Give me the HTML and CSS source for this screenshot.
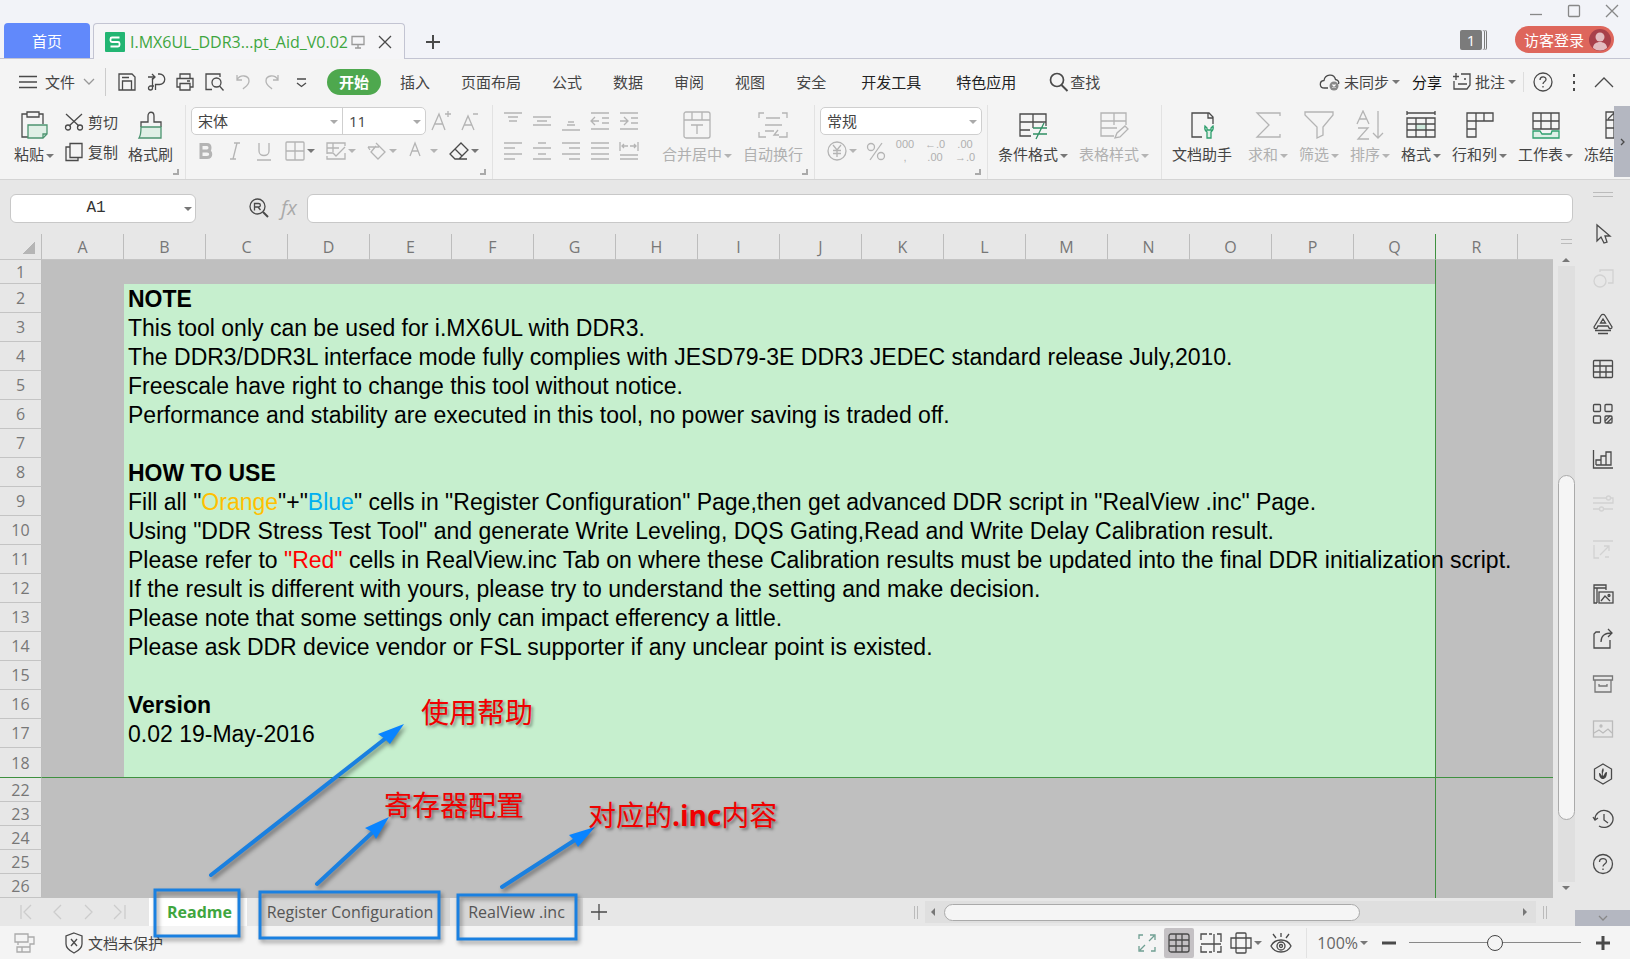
FILE: index.html
```html
<!DOCTYPE html>
<html lang="zh-CN">
<head>
    <meta charset="UTF-8">
    <title>I.MX6UL_DDR3 Script Aid V0.02</title>
    <link rel="stylesheet" href="styles.css">
</head>
<body>

<!-- Title bar -->
<header class="titlebar">
    <button class="home-tab">首页</button>
    <div class="doc-tab">
        <svg class="logo" width="20" height="20" viewBox="0 0 20 20"><rect width="20" height="20" rx="1" fill="#22b573"/><path d="M14.5 5.5H7a1.500 1.500 0 0 0-1.500 1.500v1.500A1.500 1.500 0 0 0 7 10h6a1.500 1.500 0 0 1 1.500 1.500V13a1.500 1.500 0 0 1-1.500 1.500H5.500" fill="none" stroke="#fff" stroke-width="1.800"/></svg>
        <span class="doc-name">I.MX6UL_DDR3...pt_Aid_V0.02</span>
        <svg class="grey" width="14" height="14" viewBox="0 0 14 14"><path d="M1 1.500h12v8H1zM7 9.500v3M4 13h6"/></svg>
        <button class="icon-btn close-tab" aria-label="关闭"><svg width="14" height="14" viewBox="0 0 14 14"><path d="M1 1l12 12M13 1L1 13"/></svg></button>
    </div>
    <button class="icon-btn new-tab" aria-label="新建"><svg width="16" height="16" viewBox="0 0 16 16"><path class="thick" d="M8 1v14M1 8h14"/></svg></button>
    <div class="window-side">
        <div class="window-controls">
            <button class="icon-btn" aria-label="最小化"><svg width="14" height="14" viewBox="0 0 14 14"><path d="M1 10.500h12"/></svg></button>
            <button class="icon-btn" aria-label="最大化"><svg width="14" height="14" viewBox="0 0 14 14"><rect x="1.500" y="1.500" width="11" height="11" rx="1"/></svg></button>
            <button class="icon-btn" aria-label="关闭窗口"><svg width="14" height="14" viewBox="0 0 14 14"><path d="M1 1l12 12M13 1L1 13"/></svg></button>
        </div>
        <div class="account">
            <span class="count">1</span>
            <button class="login">访客登录
                <svg width="22" height="22" viewBox="0 0 22 22"><circle cx="11" cy="11" r="11" fill="#a8404a"/><circle cx="11" cy="8" r="4.500" fill="#e3bcc0"/><path d="M4 19c0-8 14-8 14 0a11 11 0 0 1-14 0z" fill="#e3bcc0"/></svg>
            </button>
        </div>
    </div>
</header>

<!-- Menu -->
<nav class="menu">
    <button class="file-btn">
        <svg width="18" height="14" viewBox="0 0 18 14"><path d="M0 1.500h18M0 7h18M0 12.500h18"/></svg>
        文件
        <svg class="grey" width="12" height="8" viewBox="0 0 12 8"><path d="M1 1l5 5 5-5"/></svg>
    </button>
    <div class="quick">
        <button class="icon-btn" aria-label="保存"><svg width="20" height="20" viewBox="0 0 20 20"><path d="M2 2h13l3 3v13H2zM5.500 18V9h9v9M5 5.500h7"/></svg></button>
        <button class="icon-btn" aria-label="输出"><svg width="20" height="20" viewBox="0 0 20 20"><path d="M2 5h7M6 2l3 3-3 3M8 14H4.500a2 2 0 1 0 2 2V6M12 2h1.500a4.500 4.500 0 0 1 0 10.500H9.500V18"/></svg></button>
        <button class="icon-btn" aria-label="打印"><svg width="20" height="20" viewBox="0 0 20 20"><path d="M5 6V2h10v4M5 15H2V6.500h16V15h-3M5 11.500h10V18H5zM12 9h3"/></svg></button>
        <button class="icon-btn" aria-label="预览"><svg width="20" height="20" viewBox="0 0 20 20"><path d="M8 17.500H2V2h14v3"/><circle cx="12.500" cy="10.500" r="4.500"/><path d="M15.500 14l4 4.500"/></svg></button>
        <button class="icon-btn off" aria-label="撤销"><svg width="20" height="20" viewBox="0 0 20 20"><path d="M4 3v5h5M4 8c3-6 12-5 12 1 0 4-4 6-6 8"/></svg></button>
        <button class="icon-btn off" aria-label="恢复"><svg width="20" height="20" viewBox="0 0 20 20"><path d="M16 3v5h-5M16 8c-3-6-12-5-12 1 0 4 4 6 6 8"/></svg></button>
        <button class="icon-btn" aria-label="更多"><svg width="20" height="20" viewBox="0 0 20 20"><path d="M6 7h9M6 11l4.500 3.500L15 11"/></svg></button>
    </div>
    <button class="tab active">开始</button>
    <button class="tab">插入</button>
    <button class="tab">页面布局</button>
    <button class="tab">公式</button>
    <button class="tab">数据</button>
    <button class="tab">审阅</button>
    <button class="tab">视图</button>
    <button class="tab">安全</button>
    <button class="tab wide">开发工具</button>
    <button class="tab wide">特色应用</button>
    <button class="find"><svg width="20" height="20" viewBox="0 0 20 20"><circle cx="8" cy="8" r="6.500" stroke-width="1.700"/><path class="thick" d="M12.500 13l6 6"/></svg>查找</button>
    <div class="menu-right">
        <button><svg width="22" height="20" viewBox="0 0 22 20"><path d="M9 16H5.500C0 16 0 9 5 8.500 6 2 15 1 16.500 7.500 19 8 20.500 10 19.500 12"/><circle cx="15" cy="14" r="4.500" fill="#888" stroke="none"/><path d="M13.500 12.500l3 3M16.500 12.500l-3 3" stroke="#fff"/></svg>未同步<i class="caret"></i></button>
        <button class="share">分享</button>
        <button><svg width="20" height="20" viewBox="0 0 20 20"><path d="M4 1v7M1 4.500h6M9 2h9v11l-3 4H2V9M6 12h9M12 7h2"/></svg>批注<i class="caret"></i></button>
        <button class="icon-btn help" aria-label="帮助"><svg width="20" height="20" viewBox="0 0 20 20"><circle cx="10" cy="10" r="9"/><path d="M7 8c0-4 6-4 6-.5 0 2-3 2-3 4.500M10 14v1.500"/></svg></button>
        <button class="icon-btn dots" aria-label="选项"><svg width="4" height="18" viewBox="0 0 4 18"><path class="thick" d="M2 1v3M2 8v3M2 15v3"/></svg></button>
        <button class="icon-btn" aria-label="收起"><svg width="20" height="12" viewBox="0 0 20 12"><path d="M1 11l9-9 9 9"/></svg></button>
    </div>
</nav>

<!-- Ribbon -->
<section class="ribbon">
    <div class="group clipboard">
        <button class="big"><svg width="30" height="30" viewBox="0 0 30 30"><path d="M8 4H3v23h7M20 4h4v10M8 2h12v5H8z"/><path d="M9 15h19v9l-4 4H9z" fill="#e0efe6" stroke="#4c9470"/><path d="M28 24h-4v4" stroke="#4c9470"/></svg><span>粘贴<i class="caret"></i></span></button>
        <div class="stack">
            <button><svg width="20" height="20" viewBox="0 0 20 20"><path d="M2 2l13 12M18 2L5 14"/><circle cx="4" cy="15.500" r="2.500"/><circle cx="16" cy="15.500" r="2.500"/></svg>剪切</button>
            <button><svg width="20" height="20" viewBox="0 0 20 20"><path d="M6 1.500h12v14H6zM6 5H2v13.500h12v-3"/></svg>复制</button>
        </div>
        <button class="big brush"><svg width="30" height="30" viewBox="0 0 30 30"><path d="M5 17v-5h7V6c0-5 6-5 6 0v6h7v5"/><path d="M5 17h20v11H3c2-3 2-6 2-11z" fill="#e0efe6" stroke="#4c9470"/></svg><span>格式刷</span></button>
        <i class="corner"></i>
    </div>

    <div class="group font">
        <div class="row">
            <div class="combo">
                <label class="select family"><select aria-label="字体"><option>宋体</option></select></label>
                <label class="select size"><select aria-label="字号"><option>11</option></select></label>
            </div>
            <button class="tool off" aria-label="增大字号"><svg width="20" height="22" viewBox="0 0 20 22"><path d="M1 20L8 4l6 16M3 14h9M14 4h6M17 1v6"/></svg></button>
            <button class="tool off" aria-label="减小字号"><svg width="20" height="22" viewBox="0 0 20 22"><path d="M2 20L8 6l6 14M4 15h8M13 4h5"/></svg></button>
        </div>
        <div class="row">
            <button class="tool off" aria-label="加粗"><svg width="20" height="20" viewBox="0 0 20 20"><path class="heavy" d="M5 3.500v13h6c5 0 5-6.500 0-6.500 4 0 4-6.500 0-6.500zM5 10h6"/></svg></button>
            <button class="tool off" aria-label="倾斜"><svg width="20" height="20" viewBox="0 0 20 20"><path d="M9 2h6M5 18h6M12 2L8 18"/></svg></button>
            <button class="tool off" aria-label="下划线"><svg width="20" height="20" viewBox="0 0 20 20"><path d="M5 2v8c0 6 10 6 10 0V2M3 19h14"/></svg></button>
            <button class="drop off dark-caret" aria-label="边框"><svg width="20" height="20" viewBox="0 0 20 20"><rect x="1" y="1" width="18" height="18" rx="1"/><path d="M10 1v18M1 10h18"/></svg><i class="caret"></i></button>
            <button class="drop off" aria-label="样式"><svg width="20" height="20" viewBox="0 0 20 20"><path d="M19 5V2H1v11M1 7h12M7 2v9M1 12h6l3 3 9-9M1 15v3h18v-6"/></svg><i class="caret"></i></button>
            <button class="drop off" aria-label="填充"><svg width="20" height="20" viewBox="0 0 20 20"><path d="M1 6h11M1 6l2 3M9 2l9 9-7 7-7-7 5-6"/></svg><i class="caret"></i></button>
            <button class="drop off" aria-label="字体颜色"><svg width="20" height="20" viewBox="0 0 20 20"><path d="M2 15L7 2l5 13M4 10h6"/></svg><i class="caret"></i></button>
            <button class="drop" aria-label="清除"><svg width="20" height="20" viewBox="0 0 20 20"><path d="M12 2l7 7-9 9H6l-5-5zM6 8l7 7M6 18h12"/></svg><i class="caret"></i></button>
        </div>
        <i class="corner"></i>
    </div>

    <div class="group align">
        <div class="align-tools">
            <div class="row">
                <button class="tool off" aria-label="顶端对齐"><svg width="20" height="20" viewBox="0 0 20 20"><path d="M1 2h18M5 6h10M6 10h8"/></svg></button>
                <button class="tool off" aria-label="垂直居中"><svg width="20" height="20" viewBox="0 0 20 20"><path d="M1 6h18M5 10h10M1 14h18"/></svg></button>
                <button class="tool off" aria-label="底端对齐"><svg width="20" height="20" viewBox="0 0 20 20"><path d="M7 11h6M6 14h8M1 19h18"/></svg></button>
                <button class="tool off" aria-label="减少缩进"><svg width="20" height="20" viewBox="0 0 20 20"><path d="M1 2h18M12 7h7M12 12h7M1 18h18M1 10h8M5 6l-4 4 4 4"/></svg></button>
                <button class="tool off" aria-label="增加缩进"><svg width="20" height="20" viewBox="0 0 20 20"><path d="M1 2h18M12 7h7M12 12h7M1 18h18M1 10h8M5 6l4 4-4 4"/></svg></button>
            </div>
            <div class="row">
                <button class="tool off" aria-label="左对齐"><svg width="20" height="20" viewBox="0 0 20 20"><path d="M1 2h18M1 7h11M1 13h18M1 18h11"/></svg></button>
                <button class="tool off" aria-label="居中"><svg width="20" height="20" viewBox="0 0 20 20"><path d="M6 2h8M1 7h18M6 13h8M1 18h18"/></svg></button>
                <button class="tool off" aria-label="右对齐"><svg width="20" height="20" viewBox="0 0 20 20"><path d="M1 2h18M8 7h11M1 13h18M8 18h11"/></svg></button>
                <button class="tool off" aria-label="两端对齐"><svg width="20" height="20" viewBox="0 0 20 20"><path d="M1 2h18M1 7h18M1 13h18M1 18h18"/></svg></button>
                <button class="tool off" aria-label="分散对齐"><svg width="20" height="20" viewBox="0 0 20 20"><path d="M1 1v9M19 1v9M3 5h6M11 5h6M5 3L3 5l2 2M15 3l2 2-2 2M1 14h18M1 18h18"/></svg></button>
            </div>
        </div>
        <button class="big off"><svg width="30" height="30" viewBox="0 0 30 30"><rect x="2" y="2" width="26" height="26" rx="2"/><path d="M2 10h26M10 2v8M20 2v8M9 15h12M15 15v9"/></svg><span>合并居中<i class="caret"></i></span></button>
        <button class="big off"><svg width="30" height="30" viewBox="0 0 30 30"><path d="M1 8V3h5M24 3h5v5M29 22v5h-8M8 27H1v-5M8 8h14M7 15h17M7 21h9M20 20l-4 5h5"/></svg><span>自动换行</span></button>
        <i class="corner"></i>
    </div>

    <div class="group number">
        <div class="row">
            <div class="combo"><label class="select format"><select aria-label="数字格式"><option>常规</option></select></label></div>
        </div>
        <div class="row">
            <button class="drop off" aria-label="货币"><svg width="20" height="20" viewBox="0 0 20 20"><circle cx="10" cy="10" r="9"/><path d="M6 4l4 5 4-5M10 9v7M6 9.500h8M6 12.500h8"/></svg><i class="caret"></i></button>
            <button class="tool off" aria-label="百分比"><svg width="20" height="20" viewBox="0 0 20 20"><circle cx="5" cy="6" r="3.500"/><circle cx="15" cy="15" r="3.500"/><path d="M16 2L4 19"/></svg></button>
            <button class="digits off"><span>000</span><span>,</span></button>
            <button class="digits off"><span>←.0</span><span>.00</span></button>
            <button class="digits off"><span>.00</span><span>→.0</span></button>
        </div>
        <i class="corner"></i>
    </div>

    <div class="group styles">
        <button class="big"><svg width="30" height="30" viewBox="0 0 30 30"><path d="M13 26H2V4h26v12M2 12h26M15 4v14M2 20h10"/><path d="M15 18h14M15 24h14M26 13l-8 16" stroke="#2f8f63"/></svg><span>条件格式<i class="caret"></i></span></button>
        <button class="big off"><svg width="30" height="30" viewBox="0 0 30 30"><path d="M15 26H2V3h25v12M2 11h25M2 18h16M15 3v12M26 16l3 3-8 8-5 1 2-5z"/></svg><span>表格样式<i class="caret"></i></span></button>
    </div>

    <div class="group tools">
        <button class="big"><svg width="30" height="30" viewBox="0 0 30 30"><path d="M15 27H5V3h17l4 4v7M21 3v5h5"/><path d="M18 16c-1 5 1 5 2 6v6h4v-6c1-1 3-2 2-6l-2 2v2h-4v-2z" fill="#dff0e7" stroke="#2f9f6d"/></svg><span>文档助手</span></button>
        <button class="big off sum"><svg width="30" height="30" viewBox="0 0 30 30"><path d="M27 6V3H4l12 12L4 27h23v-3"/></svg><span>求和<i class="caret"></i></span></button>
        <button class="big off"><svg width="30" height="30" viewBox="0 0 30 30"><path d="M1 2h28v3l-10 12v8l-6 3V17L1 5z"/></svg><span>筛选<i class="caret"></i></span></button>
        <button class="big off"><svg width="30" height="30" viewBox="0 0 30 30"><path d="M2 14L8 1l6 13M4 9h8M3 18h10L3 29h11M23 1v27M18 23l5 5 5-5"/></svg><span>排序<i class="caret"></i></span></button>
        <button class="big"><svg width="30" height="30" viewBox="0 0 30 30"><path d="M1 3h28M1 1v4M29 1v4"/><path d="M10 14h10v6H10z" fill="#cfeadd" stroke="none"/><path d="M1 8h28v19H1zM1 14h28M1 20h28M10 8v19M20 8v19"/></svg><span>格式<i class="caret"></i></span></button>
        <button class="big"><svg width="30" height="30" viewBox="0 0 30 30"><path d="M2 3h26v8H11v16H2zM2 11h9V3M19 3v8M2 19h9"/></svg><span>行和列<i class="caret"></i></span></button>
        <button class="big"><svg width="30" height="30" viewBox="0 0 30 30"><path d="M2 3h26v16H2zM2 11h26M10 3v16M20 3v16"/><path d="M2 21h7l2 3h9l1-3h7v7H2z" fill="#dff0e7" stroke="#2f9f6d"/></svg><span>工作表<i class="caret"></i></span></button>
        <button class="big freeze"><svg width="30" height="30" viewBox="0 0 30 30"><path d="M2 2h26v26H2zM2 10h26M10 2v26M2 18h26M10 3l-6 6M18 12l-5 5"/></svg><span>冻结</span></button>
    </div>
    <button class="ribbon-more" aria-label="更多工具"><svg width="5" height="8" viewBox="0 0 5 8"><path d="M1 1l3 3-3 3"/></svg></button>
</section>

<main class="workbook">
    <div class="left-pane">
        <!-- Formula bar -->
        <div class="formula">
            <label class="select name-box"><input type="text" value="A1" aria-label="名称框"></label>
            <button class="icon-btn lookup" aria-label="查找单元格"><svg width="20" height="20" viewBox="0 0 20 20"><circle cx="8.500" cy="8.500" r="7.500"/><path d="M5.500 12.500v-7h4c2.500 0 2.500 3.500 0 3.500h-4M9 9l2.500 3"/><path class="thick" d="M14 14l5 5"/></svg></button>
            <span class="fx">fx</span>
            <input class="formula-input" type="text" aria-label="编辑栏">
        </div>

        <div class="sheet-area">
            <div class="sheet-wrap">
            <table class="sheet">
                <colgroup>
                    <col class="c-head"><col class="c"><col class="c"><col class="c"><col class="c"><col class="c"><col class="c"><col class="c"><col class="c"><col class="c"><col class="c"><col class="c"><col class="c"><col class="c"><col class="c"><col class="c"><col class="c"><col class="c"><col class="c"><col>
                </colgroup>
                <thead>
                    <tr><th class="select-all"></th><th>A</th><th>B</th><th>C</th><th>D</th><th>E</th><th>F</th><th>G</th><th>H</th><th>I</th><th>J</th><th>K</th><th>L</th><th>M</th><th>N</th><th>O</th><th>P</th><th class="edge">Q</th><th>R</th><th class="rest"></th></tr>
                </thead>
                <tbody>
                    <tr class="small"><th>1</th><td></td><td class="edge" colspan="16"></td><td colspan="2"></td></tr>
                    <tr><th>2</th><td></td><td class="note" colspan="16"><b>NOTE</b></td><td colspan="2"></td></tr>
                    <tr><th>3</th><td></td><td class="note" colspan="16">This tool only can be used for i.MX6UL with DDR3.</td><td colspan="2"></td></tr>
                    <tr><th>4</th><td></td><td class="note" colspan="16">The DDR3/DDR3L interface mode fully complies with JESD79-3E DDR3 JEDEC standard release July,2010.</td><td colspan="2"></td></tr>
                    <tr><th>5</th><td></td><td class="note" colspan="16">Freescale have right to change this tool without notice.</td><td colspan="2"></td></tr>
                    <tr><th>6</th><td></td><td class="note" colspan="16">Performance and stability are executed in this tool, no power saving is traded off.</td><td colspan="2"></td></tr>
                    <tr><th>7</th><td></td><td class="note" colspan="16"></td><td colspan="2"></td></tr>
                    <tr><th>8</th><td></td><td class="note" colspan="16"><b>HOW TO USE</b></td><td colspan="2"></td></tr>
                    <tr><th>9</th><td></td><td class="note" colspan="16">Fill all "<span class="orange">Orange</span>"+"<span class="blue">Blue</span>" cells in "Register Configuration" Page,then get advanced DDR script in "RealView .inc" Page.</td><td colspan="2"></td></tr>
                    <tr><th>10</th><td></td><td class="note" colspan="16">Using "DDR Stress Test Tool" and generate Write Leveling, DQS Gating,Read and Write Delay Calibration result.</td><td colspan="2"></td></tr>
                    <tr><th>11</th><td></td><td class="note" colspan="16">Please refer to <span class="red">"Red"</span> cells in RealView.inc Tab on where these Calibration results must be updated into the final DDR initialization script.</td><td colspan="2"></td></tr>
                    <tr><th>12</th><td></td><td class="note" colspan="16">If the result is different with yours, please try to understand the setting and make decision.</td><td colspan="2"></td></tr>
                    <tr><th>13</th><td></td><td class="note" colspan="16">Please note that some settings only can impact efferency a little.</td><td colspan="2"></td></tr>
                    <tr><th>14</th><td></td><td class="note" colspan="16">Please ask DDR device vendor or FSL supporter if any unclear point is existed.</td><td colspan="2"></td></tr>
                    <tr><th>15</th><td></td><td class="note" colspan="16"></td><td colspan="2"></td></tr>
                    <tr><th>16</th><td></td><td class="note" colspan="16"><b>Version</b></td><td colspan="2"></td></tr>
                    <tr><th>17</th><td></td><td class="note" colspan="16">0.02 19-May-2016</td><td colspan="2"></td></tr>
                    <tr class="frozen"><th>18</th><td></td><td class="note" colspan="16"></td><td colspan="2"></td></tr>
                    <tr class="small"><th>22</th><td></td><td class="edge" colspan="16"></td><td colspan="2"></td></tr>
                    <tr class="small"><th>23</th><td></td><td class="edge" colspan="16"></td><td colspan="2"></td></tr>
                    <tr class="small"><th>24</th><td></td><td class="edge" colspan="16"></td><td colspan="2"></td></tr>
                    <tr class="small"><th>25</th><td></td><td class="edge" colspan="16"></td><td colspan="2"></td></tr>
                    <tr class="small"><th>26</th><td></td><td class="edge" colspan="16"></td><td colspan="2"></td></tr>
                </tbody>
            </table>
            </div>
            <div class="vscroll">
                <div class="split-grip"></div>
                <i class="arrow up"></i>
                <div class="vtrack"><div class="vthumb"></div></div>
                <i class="arrow down"></i>
            </div>
        </div>

        <!-- Sheet tabs -->
        <div class="sheet-tabs">
            <div class="tab-nav">
                <svg width="106" height="16" viewBox="0 0 106 16"><path d="M1 1v14M11 1L4 8l7 7M41 1l-7 7 7 7M65 1l7 7-7 7M94 1l7 7-7 7M105 1v14"/></svg>
            </div>
            <button class="sheet-tab current">Readme</button>
            <button class="sheet-tab config">Register Configuration</button>
            <button class="sheet-tab inc">RealView .inc</button>
            <button class="icon-btn add-sheet" aria-label="新建工作表"><svg width="18" height="18" viewBox="0 0 18 18"><path d="M9 1v16M1 9h16"/></svg></button>
            <div class="hscroll">
                <i class="grip"></i>
                <div class="htrack">
                    <i class="arrow left"></i>
                    <div class="hrange"><div class="hthumb"></div></div>
                    <i class="arrow right"></i>
                </div>
                <i class="grip"></i>
            </div>
        </div>
    </div>

    <aside class="sidebar">
        <i class="side-grip"></i>
        <button class="side" aria-label="选择"><svg width="22" height="22" viewBox="0 0 22 22"><path d="M5 2v16l4-4 3 6 3-1-2-6h5z"/></svg></button>
        <button class="side faint" aria-label="形状"><svg width="22" height="22" viewBox="0 0 22 22"><circle cx="8" cy="13" r="6"/><path d="M8 4V2h13v13h-5"/></svg></button>
        <button class="side" aria-label="艺术字"><svg width="22" height="22" viewBox="0 0 22 22"><path d="M2 14L9 2.500c1-1.500 3-1.500 4 0L20 14c0 2-2 2-3 1l-1-2H6l-1 2c-1 1-3 1-3-1zM8.500 10L11 6l2.500 4zM3 17.500h16M6 20.500h10"/></svg></button>
        <button class="side" aria-label="表格"><svg width="22" height="22" viewBox="0 0 22 22"><rect x="1.500" y="2.500" width="19" height="17" rx="1"/><path d="M1 8h20M1 14h20M8 3v17M14 8v12"/></svg></button>
        <button class="side" aria-label="组件"><svg width="22" height="22" viewBox="0 0 22 22"><rect x="1.500" y="1.500" width="7" height="7" rx="1"/><rect x="13" y="1.500" width="7" height="7" rx="1"/><rect x="1.500" y="13" width="7" height="7" rx="1"/><rect x="13" y="13" width="7" height="7" rx="1"/><path d="M13 18l5-5M15 20l5-5"/></svg></button>
        <button class="side" aria-label="图表"><svg width="22" height="22" viewBox="0 0 22 22"><path d="M1.500 2v18H21M4 17v-5h5v5M9 17V8h5v9M14 17V4h5v13zM4 17h15"/></svg></button>
        <button class="side faint" aria-label="设置"><svg width="22" height="22" viewBox="0 0 22 22"><path d="M1 5h13M19 5h2v5H1M1 16h6M12 16h9"/><circle cx="16.500" cy="5" r="2"/><circle cx="9.500" cy="16" r="2"/></svg></button>
        <button class="side faint" aria-label="分析"><svg width="22" height="22" viewBox="0 0 22 22"><path d="M1 3h20M2 7v13h5M8 17l9-9M12 8h5v5M13 19h4"/></svg></button>
        <button class="side" aria-label="图片库"><svg width="22" height="22" viewBox="0 0 22 22"><path d="M5 20H2V2h12v5M2 5h12M5 5v15"/><rect x="7" y="9" width="14" height="11"/><path d="M9 18l4-5 5 5"/><circle cx="17" cy="12.500" r="1"/></svg></button>
        <button class="side" aria-label="分享"><svg width="22" height="22" viewBox="0 0 22 22"><path d="M8 4H4L2 6v14h16v-8M9 14c0-6 3-9 11-9M16 1l4 4-4 4"/></svg></button>
        <button class="side mid" aria-label="归档"><svg width="22" height="22" viewBox="0 0 22 22"><path d="M1.500 3h19v4h-19zM3 7v12h16V7M7 11v2h8v-2"/></svg></button>
        <button class="side pale" aria-label="图片"><svg width="22" height="22" viewBox="0 0 22 22"><rect x="1.500" y="3" width="19" height="16"/><path d="M2 15l5-3 4 3 5-4 4 4"/><circle cx="9" cy="8" r="1"/></svg></button>
        <button class="side" aria-label="安全"><svg width="22" height="22" viewBox="0 0 22 22"><path d="M11 1l8.500 5v10L11 21l-8.500-5V6z"/><path d="M11 5c2 3-1 4 0 8 2-1 1-4 4-4 0 5-2 7-4 7s-4-2-4-6c2 0 2 2 3 3 0-4-1-5 1-8z" fill="#444" stroke="none"/></svg></button>
        <button class="side" aria-label="历史"><svg width="22" height="22" viewBox="0 0 22 22"><path d="M3 11a9 8.500 0 1 1 4 7M1 9l2 3 3-2M12 6v6l4 3"/></svg></button>
        <button class="side" aria-label="帮助中心"><svg width="22" height="22" viewBox="0 0 22 22"><circle cx="11" cy="11" r="9.500"/><path d="M7.500 9c0-4.500 7-4.500 7-.5 0 2.500-3.500 2.500-3.500 5M11 15.500v1.500"/></svg></button>
        <button class="side-more" aria-label="更多"><svg width="10" height="6" viewBox="0 0 10 6"><path d="M1 1l4 4 4-4"/></svg></button>
    </aside>

    <!-- Hand-drawn hints over the sheet -->
    <div class="hints">
        <svg width="640" height="779" viewBox="0 180 640 779">
            <g stroke="#1a80e0" stroke-width="3" fill="none">
                <rect x="155" y="890" width="84" height="46"/>
                <rect x="260" y="892" width="179" height="46"/>
                <rect x="458" y="895" width="118" height="44"/>
                <path d="M211 875L386 738M317 884l57-53M502 887l73-47" stroke-width="4" stroke-linecap="round"/>
            </g>
            <g fill="#0a84ff">
                <path d="M404 724l-14 20-5-5-7-5z"/>
                <path d="M389 817l-13 22-4-7-7-4z"/>
                <path d="M595 827l-17 20-4-7-5-5z"/>
            </g>
        </svg>
        <span class="hint help-hint">使用帮助</span>
        <span class="hint config-hint">寄存器配置</span>
        <span class="hint inc-hint">对应的<b>.inc</b>内容</span>
    </div>
</main>

<!-- Status bar -->
<footer class="status">
    <button class="icon-btn status-icon" aria-label="设备"><svg width="22" height="22" viewBox="0 0 22 22"><path d="M1 2h13v8H1zM4 10v3M14 5h6v7h-4v8H3v-5h13M8 15v5"/></svg></button>
    <button class="protect"><svg width="20" height="22" viewBox="0 0 20 22"><path d="M10 1l8 3v8c0 4-4 7-8 9-4-2-8-5-8-9V4zM7 7l6 7M13 7l-6 7"/></svg>文档未保护</button>
    <div class="views">
        <button class="icon-btn view" aria-label="全屏"><svg class="teal" width="22" height="22" viewBox="0 0 22 22"><path d="M3 7V3h4M19 15v4h-4M13 9l5-5M14 3h5v5M4 18l5-5M3 14v5h5"/></svg></button>
        <button class="icon-btn view chosen" aria-label="普通视图"><svg width="22" height="22" viewBox="0 0 22 22"><rect x="1" y="2" width="20" height="18" rx="2"/><path d="M1 8h20M1 14h20M8 2v18M14 2v18"/></svg></button>
        <button class="icon-btn view" aria-label="分页预览"><svg width="22" height="22" viewBox="0 0 22 22"><path d="M1 8V2h6M9 2h3M1 12h20M14 2v18M17 2h4v8M1 14v6h6M9 20h3M17 20h4v-6"/></svg></button>
        <button class="icon-btn view layout" aria-label="页面布局"><svg width="22" height="22" viewBox="0 0 22 22"><rect x="6" y="1" width="10" height="20" rx="1"/><path d="M6 6H1v10h5M16 6h5v10h-5M6 6h10M6 16h10"/></svg><i class="caret"></i></button>
        <button class="icon-btn view" aria-label="护眼模式"><svg width="22" height="22" viewBox="0 0 22 22"><path d="M1 14c4-8 16-8 20 0-4 8-16 8-20 0zM11 1v4M3 2l3 4M19 2l-3 4"/><circle cx="11" cy="14" r="4"/><circle cx="11" cy="14" r="1.500"/></svg></button>
    </div>
    <div class="zoom">
        <button class="percent">100%<i class="caret"></i></button>
        <button class="icon-btn" aria-label="缩小"><svg width="16" height="16" viewBox="0 0 16 16"><path class="heavy" d="M1 8h14"/></svg></button>
        <input type="range" min="0" max="100" value="50" aria-label="缩放">
        <button class="icon-btn" aria-label="放大"><svg width="16" height="16" viewBox="0 0 16 16"><path class="heavy" d="M1 8h14M8 1v14"/></svg></button>
    </div>
</footer>

</body>
</html>
```
FILE: styles.css
```css
* {
    box-sizing: border-box;
}
body {
    margin: 0;
    min-height: 100vh;
    display: flex;
    flex-direction: column;
    overflow: hidden;
    background: #e7e7e7;
    color: #444;
    font-family: "Open Sans", "Noto Sans CJK SC", sans-serif;
    font-size: 15px;
    line-height: 20px;
}
button {
    border: none;
    background: none;
    padding: 0;
    margin: 0;
    font: inherit;
    color: inherit;
    white-space: nowrap;
    display: flex;
    align-items: center;
    flex-shrink: 0;
}
svg {
    display: block;
    flex-shrink: 0;
    fill: none;
    stroke: #4a4a4a;
    stroke-width: 1.3px;
}
.thick {
    stroke-width: 2px;
}
.heavy {
    stroke-width: 3px;
}
.grey {
    stroke: #999;
}
.icon-btn {
    justify-content: center;
}
.caret {
    border: 4px solid transparent;
    border-top-color: #777;
    border-bottom: none;
    margin-left: 2px;
    display: inline-block;
    vertical-align: middle;
}

/* title bar */
.titlebar {
    display: flex;
    align-items: flex-end;
    height: 59px;
    padding-left: 4px;
    background: #f2f3f8;
    box-shadow: inset 0 -1px #c3c4d2;
}
.home-tab {
    width: 86px;
    height: 35px;
    margin-right: 3px;
    margin-bottom: 1px;
    justify-content: center;
    border-radius: 4px 4px 0 0;
    background: #6189fb;
    color: #fff;
}
.doc-tab {
    display: flex;
    align-items: center;
    width: 312px;
    height: 36px;
    padding-left: 11px;
    border: 1px solid #c3c4d2;
    border-bottom: none;
    border-radius: 4px 4px 0 0;
    background: #f5f5f7;
}
.doc-name {
    width: 221px;
    margin: 0 0 0 5px;
    color: #3fa63f;
    font-size: 16px;
    white-space: nowrap;
}
.logo {
    stroke: none;
}
.close-tab {
    margin-left: 13px;
}
.new-tab {
    margin: 0 0 9px 20px;
}
.window-side {
    margin-left: auto;
    align-self: flex-start;
}
.window-controls {
    display: flex;
    justify-content: flex-end;
    gap: 24px;
    padding: 4px 11px 0 0;
}
.window-controls svg {
    stroke: #888;
}
.account {
    display: flex;
    align-items: center;
    padding: 8px 16px 0 0;
}
.count {
    width: 22px;
    height: 20px;
    margin-right: 33px;
    border-radius: 2px;
    background: #7b7b7b;
    box-shadow: 2px 0 #f2f3f8, 3px 0 #7b7b7b, 4px 0 #f2f3f8, 5px 0 #7b7b7b;
    color: #fff;
    text-align: center;
}
.login {
    height: 27px;
    padding: 0 3px 0 9px;
    gap: 5px;
    border-radius: 14px;
    background: #de665c;
    color: #fff;
}
.login svg {
    stroke: none;
}

/* menu */
.menu {
    display: flex;
    align-items: center;
    height: 46px;
    background: #f4f4f4;
}
.file-btn {
    height: 28px;
    margin-left: 19px;
    padding-right: 10px;
    gap: 8px;
    border-right: 1px solid #ccc;
}
.quick {
    display: flex;
    gap: 9px;
    margin: 0 16px 0 11px;
}
.off {
    color: #b0b0b0;
}
.off svg {
    stroke: #b4b4b4;
}
.off .caret {
    border-top-color: #b4b4b4;
}
.tab {
    margin-left: 31px;
}
.tab.active {
    height: 26px;
    margin-left: 0;
    margin-right: -12px;
    padding: 0 12px;
    border-radius: 13px;
    background: #4ea84e;
    color: #fff;
    font-weight: bold;
}
.tab.wide {
    margin-left: 35px;
    color: #222;
}
.find {
    margin-left: 33px;
    gap: 1px;
}
.menu-right {
    display: flex;
    align-items: center;
    margin-left: auto;
    padding-right: 16px;
}
.menu-right button {
    gap: 3px;
}
.menu-right .caret {
    margin-left: 0;
}
.menu-right .share {
    margin: 0 10px 0 12px;
    color: #111;
}
.menu-right .help {
    margin-left: 7px;
    padding-left: 9px;
    border-left: 1px solid #ddd;
}
.menu-right .dots {
    margin: 0 18px 0 19px;
}

/* ribbon */
.ribbon {
    display: flex;
    height: 75px;
    background: #f4f4f4;
    border-bottom: 1px solid #d4d4d4;
}
.group {
    position: relative;
    display: flex;
    flex-shrink: 0;
    border-right: 1px solid #e2e2e2;
}
.corner {
    position: absolute;
    right: 6px;
    bottom: 4px;
    width: 6px;
    height: 6px;
    border: solid #aaa;
    border-width: 0 2px 2px 0;
}
.big {
    flex-direction: column;
    align-self: flex-start;
    padding-top: 5px;
    gap: 4px;
}
.clipboard {
    width: 186px;
    padding-left: 14px;
}
.stack {
    display: flex;
    flex-direction: column;
    gap: 10px;
    margin: 7px 10px 0 10px;
}
.stack button {
    gap: 4px;
}
.font, .number {
    flex-direction: column;
    padding: 2px 5px 0 5px;
    gap: 2px;
}
.font {
    width: 307px;
}
.row {
    display: flex;
    align-items: center;
    height: 28px;
}
.combo {
    display: flex;
    height: 28px;
    border: 1px solid #cfcfcf;
    border-radius: 5px;
    background: #fff;
}
.select {
    position: relative;
    display: block;
}
.select::after {
    content: "";
    position: absolute;
    right: 4px;
    top: 12px;
    border: 4px solid transparent;
    border-top-color: #aaa;
    border-bottom: none;
}
select {
    appearance: none;
    width: 100%;
    height: 26px;
    padding: 0 6px;
    border: none;
    background: none;
    color: #444;
    font: inherit;
}
.family {
    width: 151px;
    border-right: 1px solid #cfcfcf;
}
.size {
    width: 82px;
}
.format {
    width: 160px;
}
.tool {
    width: 29px;
    height: 24px;
    justify-content: center;
}
.drop {
    width: 41px;
    padding-left: 7px;
}
.dark-caret .caret {
    border-top-color: #777;
}
.align {
    width: 322px;
    padding-left: 5px;
    gap: 11px;
}
.align-tools {
    display: flex;
    flex-direction: column;
    gap: 2px;
    margin-right: 8px;
    padding-top: 2px;
}
.number {
    width: 173px;
}
.digits {
    width: 30px;
    flex-direction: column;
    font-family: "Liberation Sans", Arial, sans-serif;
    font-size: 11px;
    line-height: 13px;
}
.styles {
    width: 174px;
    padding-left: 10px;
    gap: 11px;
}
.tools {
    flex: 1;
    min-width: 0;
    padding-left: 10px;
    gap: 11px;
    border-right: none;
    overflow: hidden;
}
.sum {
    margin-left: 5px;
}
.freeze {
    width: 70px;
}
.freeze span {
    width: 100%;
    text-align: left;
}
.ribbon-more {
    width: 16px;
    height: 71px;
    margin-top: 1px;
    justify-content: center;
    background: #b4b7c1;
}

/* workbook */
.workbook {
    position: relative;
    display: flex;
    flex: 1;
}
.left-pane {
    flex: 1;
    min-width: 0;
    display: flex;
    flex-direction: column;
}
.formula {
    display: flex;
    align-items: center;
    height: 54px;
    padding: 2px 2px 0 10px;
}
.formula input {
    height: 29px;
    border: 1px solid #c8c8c8;
    border-radius: 6px;
    background: #fff;
}
.name-box input {
    width: 186px;
    padding: 0 14px 0 0;
    font: 16px "Liberation Mono", monospace;
    color: #333;
    text-align: center;
}
.name-box::after {
    top: 13px;
    border-top-color: #777;
}
.lookup {
    margin: 0 12px 0 53px;
}
.fx {
    width: 26px;
    color: #aaa;
    font-size: 20px;
    font-style: italic;
}
.formula .formula-input {
    flex: 1;
    min-width: 0;
}
.sheet-area {
    display: flex;
}
.sheet-wrap {
    flex: 1;
    min-width: 0;
    overflow: hidden;
}
.sheet {
    width: 100%;
    table-layout: fixed;
    border-collapse: separate;
    border-spacing: 0;
    background: #bfbfbf;
}
.c-head {
    width: 42px;
}
.c {
    width: 82px;
}
.sheet th {
    height: 29px;
    padding: 0;
    border-right: 1px solid #bdbdbd;
    border-bottom: 1px solid #c4c4c4;
    background: #e7e7e7;
    color: #777;
    font-size: 16px;
    font-weight: normal;
    line-height: 20px;
}
.sheet thead th {
    height: 26px;
}
.sheet .small th {
    height: 24px;
}
.sheet thead .rest {
    border-right: none;
}
.sheet .select-all {
    background: linear-gradient(135deg, transparent 50%, #b5b5b5 50%) no-repeat 22px 7px / 13px 13px #e7e7e7;
}
.sheet td {
    padding: 0;
    white-space: nowrap;
}
.sheet .note {
    padding: 1px 0 0 4px;
    background: #c6efce;
    color: #000;
    font-family: "Liberation Sans", Arial, sans-serif;
    font-size: 23px;
    line-height: 28px;
}
.sheet .edge, .sheet .note {
    border-right: 1px solid #3f9140;
}
.sheet .frozen th {
    height: 30px;
}
.sheet .frozen th, .sheet .frozen td {
    border-bottom: 1px solid #3f9140;
}
.orange {
    color: #ffc000;
}
.blue {
    color: #00b0f0;
}
.red {
    color: #f00;
}

/* scroll bars */
.vscroll {
    width: 22px;
    padding-left: 4px;
    display: flex;
    flex-direction: column;
    align-items: center;
}
.split-grip {
    width: 11px;
    height: 5px;
    margin: 5px 0 14px;
    border: solid #bbb;
    border-width: 1px 0;
}
.arrow {
    border: 4px solid transparent;
}
.up {
    border-top: none;
    border-bottom-color: #777;
}
.down {
    margin-bottom: 8px;
    border-bottom: none;
    border-top-color: #777;
}
.vtrack {
    width: 17px;
    flex: 1;
    margin: 4px 0;
    background: #dfdfdf;
    display: grid;
    grid-template-rows: 34% 56% 10%;
}
.vthumb {
    grid-row: 2;
    border: 1px solid #aaa;
    border-radius: 9px;
    background: #f5f5f5;
}
.sheet-tabs {
    display: flex;
    align-items: stretch;
    height: 28px;
}
.tab-nav {
    display: flex;
    align-items: center;
    width: 149px;
    padding-left: 20px;
}
.tab-nav svg {
    stroke: #ccc;
}
.sheet-tab {
    justify-content: center;
    background: #d6d6d6;
    color: #555;
    font-size: 16px;
}
.current {
    width: 98px;
    margin-right: 12px;
    padding-left: 3px;
    background: #fff;
    color: #3fa63f;
    font-weight: bold;
}
.config {
    width: 191px;
    padding-right: 9px;
    margin-right: 7px;
}
.inc {
    width: 126px;
    padding-right: 7px;
}
.add-sheet {
    margin-left: 7px;
}
.hscroll {
    display: flex;
    align-items: center;
    width: 42%;
    margin-left: auto;
    gap: 7px;
    padding-right: 28px;
}
.grip {
    width: 4px;
    height: 13px;
    border: solid #bbb;
    border-width: 0 1px;
}
.htrack {
    display: flex;
    align-items: center;
    flex: 1;
    height: 22px;
    padding: 0 9px 0 6px;
    background: #dfdfdf;
}
.left {
    border-left: none;
    border-right-color: #777;
}
.right {
    border-right: none;
    border-left-color: #777;
}
.hrange {
    flex: 1;
    margin: 0 9px;
}
.hthumb {
    width: 73%;
    height: 17px;
    border: 1px solid #aaa;
    border-radius: 9px;
    background: #f5f5f5;
}

/* sidebar */
.sidebar {
    display: flex;
    flex-direction: column;
    align-items: center;
    width: 55px;
}
.side-grip {
    width: 20px;
    height: 5px;
    margin: 12px 0 14px;
    border: solid #bbb;
    border-width: 1px 0;
}
.side {
    height: 45px;
}
.mid svg {
    stroke: #777;
}
.pale svg {
    stroke: #bbb;
}
.faint svg {
    stroke: #d2d2d2;
}
.side-more {
    width: 55px;
    height: 16px;
    margin-top: auto;
    justify-content: center;
    background: #b4b7c1;
}
.side-more svg {
    stroke: #888;
}

/* hints drawn over the sheet */
.hints {
    position: absolute;
    left: 0;
    top: 0;
    z-index: 1;
    pointer-events: none;
}
.hints svg {
    stroke: none;
    filter: drop-shadow(2px 3px 2px rgba(0, 0, 0, 0.4));
}
.hint {
    position: absolute;
    color: #f00000;
    font-size: 28px;
    line-height: 32px;
    white-space: nowrap;
    text-shadow: 2px 2px 3px rgba(0, 0, 0, 0.4);
}
.help-hint {
    left: 421px;
    top: 516px;
}
.config-hint {
    left: 384px;
    top: 609px;
}
.inc-hint {
    left: 588px;
    top: 619px;
}

/* status bar */
.status {
    display: flex;
    align-items: center;
    height: 33px;
    background: #f4f4f4;
}
.status-icon {
    margin: 0 28px 0 14px;
}
.status-icon svg {
    stroke: #aaa;
}
.protect {
    gap: 4px;
}
.views {
    display: flex;
    align-items: center;
    margin-left: auto;
    padding-right: 10px;
    border-right: 1px solid #e2e2e2;
    gap: 2px;
}
.view {
    width: 30px;
    height: 30px;
}
.chosen {
    background: #c4c1c4;
    border-radius: 2px;
}
.layout {
    width: 36px;
}
.teal {
    stroke: #6f9f92;
}
.zoom {
    display: flex;
    align-items: center;
    padding: 0 19px 0 10px;
}
.percent {
    margin-right: 13px;
    color: #666;
    font-size: 16px;
}
.zoom input {
    appearance: none;
    width: 172px;
    height: 16px;
    margin: 0 14px 0 12px;
    background: linear-gradient(#888, #888) no-repeat center / 100% 1px;
}
.zoom input::-webkit-slider-thumb {
    appearance: none;
    width: 16px;
    height: 16px;
    border: 1px solid #444;
    border-radius: 50%;
    background: #f4f4f4;
}
```
